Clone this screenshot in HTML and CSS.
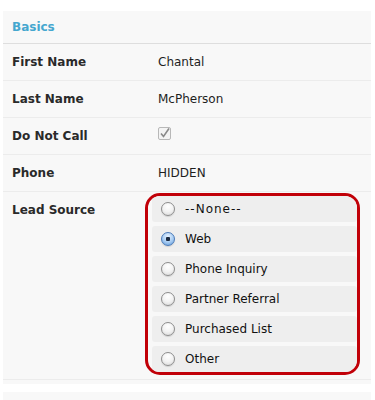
FILE: index.html
```html
<!DOCTYPE html>
<html>
<head>
<meta charset="utf-8">
<link rel="stylesheet" href="styles.css">
</head>
<body>
<div class="panel">
  <div class="header">Basics</div>
  <div class="row"><div class="label">First Name</div><div class="value">Chantal</div></div>
  <div class="row"><div class="label">Last Name</div><div class="value">McPherson</div></div>
  <div class="row"><div class="label">Do Not Call</div><div class="value"><span class="check"><svg width="13" height="13" viewBox="0 0 13 13"><rect x="0.5" y="0.5" width="12" height="12" rx="1.5" fill="#f4f4f4" stroke="#b8b8b8"/><path d="M3 6.5 L5.5 9.5 L11 1.5" fill="none" stroke="#8a8a8a" stroke-width="1.6"/></svg></span></div></div>
  <div class="row"><div class="label">Phone</div><div class="value">HIDDEN</div></div>
  <div class="row lead"><div class="label">Lead Source</div>
    <div class="options">
      <div class="opt"><span class="radio"></span><span class="dash">--None--</span></div>
      <div class="opt"><span class="radio on"></span>Web</div>
      <div class="opt"><span class="radio"></span>Phone Inquiry</div>
      <div class="opt"><span class="radio"></span>Partner Referral</div>
      <div class="opt"><span class="radio"></span>Purchased List</div>
      <div class="opt"><span class="radio"></span>Other</div>
    </div>
  </div>
</div>
<div class="panel next"></div>
</body>
</html>
```
FILE: styles.css
```css
html, body { margin: 0; padding: 0; background: #fff; }
body { padding-top: 11px; font-family: "DejaVu Sans", Verdana, sans-serif; font-size: 12px; color: #222; }
.panel { margin: 0 4px 0 3px; background: #f8f8f8; padding-bottom: 4px; }
.header { height: 32px; line-height: 32px; padding-left: 9px; color: #45a7cf; font-weight: bold; border-bottom: 1px solid #dedede; }
.row { display: grid; grid-template-columns: 155px 1fr; height: 36px; border-bottom: 1px solid #ececec; }
.label { padding-left: 9px; line-height: 36px; font-weight: bold; color: #2a2a2a; }
.value { line-height: 36px; color: #1e1e1e; }
.check { display: inline-block; vertical-align: middle; margin-top: -6px; }
.check svg { display: block; }
.row.lead { height: 187px; }
.options { margin: 1px 11px 0 -13px; height: 176px; border: 3px solid #c10008; border-radius: 15px; overflow: hidden; display: flex; flex-direction: column; gap: 4px; background: #f8f8f8; }
.opt { height: 26px; flex: none; background: #eeeeee; border-radius: 3px; margin-left: 4px; display: flex; align-items: center; padding-left: 9px; color: #111; }
.dash { letter-spacing: 1px; }
.radio { width: 12px; height: 12px; border-radius: 50%; border: 1px solid #8c8c8c; background: radial-gradient(circle at 50% 30%, #ffffff 0%, #f2f2f2 50%, #d6d6d6 100%); margin-right: 10px; flex: none; box-shadow: 0 1px 1px rgba(0,0,0,0.12); }
.radio.on { border-color: #4a7ab8; background: radial-gradient(circle at 50% 50%, #1b2a40 0 2px, transparent 2.5px), radial-gradient(circle at 50% 30%, #e6f2ff 0%, #a6cbf2 55%, #5f98d8 100%); }
.panel.next { margin-top: 8px; height: 20px; padding: 0; }
```
